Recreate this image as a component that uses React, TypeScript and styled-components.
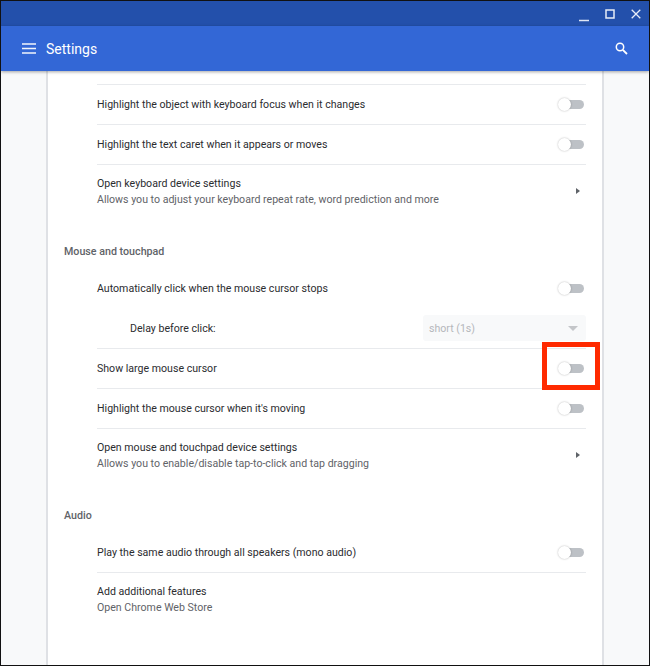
import React from "react";
import styled, { createGlobalStyle } from "styled-components";

const Global = createGlobalStyle`
  html, body { margin: 0; padding: 0; background: #000; }
  body { font-family: Roboto, "Noto Sans", sans-serif; -webkit-font-smoothing: antialiased; }
`;

const Frame = styled.div`
  position: relative;
  width: 650px;
  height: 666px;
  box-sizing: border-box;
  border: 1px solid #111;
  display: flex;
  flex-direction: column;
  overflow: hidden;
  background: #f8f9fa;
`;

const TitleBar = styled.div`
  height: 25px;
  flex: none;
  background: #2350ab;
  display: flex;
  align-items: center;
  justify-content: flex-end;
  padding-right: 8px;
  gap: 16px;
`;

const AppBar = styled.header`
  height: 45px;
  flex: none;
  background: #3367d6;
  box-shadow: 0 1px 3px rgba(0, 0, 0, 0.35);
  display: flex;
  align-items: center;
  padding: 0 21px 0 21px;
  color: #fff;
  position: relative;
  z-index: 2;
`;

const Title = styled.h1`
  margin: 0 0 0 10px;
  font-size: 14px;
  font-weight: 400;
  flex: 1;
`;

const Body = styled.main`
  flex: 1;
  display: flex;
  min-height: 0;
  padding-left: 45px;
`;

const Card = styled.section`
  width: 558px;
  box-sizing: border-box;
  background: #fff;
  border-left: 2px solid #dfe1e5;
  border-right: 2px solid #dfe1e5;
  padding: 13px 16px 0 16px;
`;

const Heading = styled.h2`
  margin: 0;
  height: 51px;
  box-sizing: border-box;
  padding-top: 27px;
  font-size: 10.7px;
  line-height: 16px;
  font-weight: 500;
  color: #5f6368;
`;

const List = styled.div`
  padding-left: 33px;
`;

const Row = styled.div<{ $tall?: boolean; $plain?: boolean; $indent?: boolean }>`
  box-sizing: border-box;
  height: ${(p) => (p.$tall ? "53px" : "40px")};
  display: flex;
  align-items: center;
  justify-content: space-between;
  border-top: ${(p) => (p.$plain ? "none" : "1px solid #e8eaed")};
  padding-left: ${(p) => (p.$indent ? "33px" : "0")};
  font-size: 10.6px;
  color: #2b2c2f;
`;

const Texts = styled.div`
  display: flex;
  flex-direction: column;
  padding-top: 1px;
  line-height: 16px;
`;

const Sub = styled.div`
  color: #5f6368;
`;

const Track = styled.div`
  position: relative;
  width: 22px;
  height: 9px;
  margin-right: 2px;
  border-radius: 5px;
  background: #bdc1c6;
`;

const Knob = styled.div`
  position: absolute;
  left: -4px;
  top: -2px;
  width: 13px;
  height: 13px;
  border-radius: 50%;
  background: #fff;
  box-shadow: 0 0 2px rgba(0, 0, 0, 0.3);
`;

const Select = styled.div`
  width: 163px;
  height: 26px;
  box-sizing: border-box;
  padding: 0 6px;
  border-radius: 3px;
  background: #f8f9fa;
  color: #b5b7ba;
  display: flex;
  align-items: center;
  justify-content: space-between;
`;

const Arrow = styled.div`
  width: 0;
  height: 0;
  margin-right: 2px;
  border-left: 5px solid transparent;
  border-right: 5px solid transparent;
  border-top: 5px solid #c4c6c9;
`;

const Chevron = styled.div`
  width: 0;
  height: 0;
  margin-right: 6px;
  border-top: 3.5px solid transparent;
  border-bottom: 3.5px solid transparent;
  border-left: 4px solid #5f6368;
`;

const Highlight = styled.div`
  position: absolute;
  left: 541px;
  top: 341px;
  width: 58px;
  height: 48px;
  box-sizing: border-box;
  border: 5px solid #ff2a00;
`;

const Toggle = () => (
  <Track>
    <Knob />
  </Track>
);

const App = () => (
  <>
    <Global />
    <Frame>
      <TitleBar>
        <svg width="10" height="14" viewBox="0 0 10 14" style={{ marginTop: 2 }}>
          <path d="M0 12.5h10" stroke="#dfe6f5" strokeWidth="1.5" />
        </svg>
        <svg width="10" height="10" viewBox="0 0 10 10">
          <path d="M1 1h8v8H1z" fill="none" stroke="#e6ecf8" strokeWidth="1.5" />
        </svg>
        <svg width="10" height="10" viewBox="0 0 10 10">
          <path d="M.7.7l8.6 8.6M9.3.7L.7 9.3" stroke="#e6ecf8" strokeWidth="1.3" />
        </svg>
      </TitleBar>
      <AppBar>
        <svg width="14" height="11" viewBox="0 0 14 11">
          <path d="M0 1h14M0 5.5h14M0 10h14" stroke="#f2f5fc" strokeWidth="1.5" />
        </svg>
        <Title>Settings</Title>
        <svg width="13" height="13" viewBox="0 0 13 13">
          <circle cx="5" cy="5" r="3.7" fill="none" stroke="#fff" strokeWidth="1.5" />
          <path d="M7.8 7.8l4.2 4.2" stroke="#fff" strokeWidth="1.8" />
        </svg>
      </AppBar>
      <Body>
        <Card>
          <List>
            <Row>
              Highlight the object with keyboard focus when it changes
              <Toggle />
            </Row>
            <Row>
              Highlight the text caret when it appears or moves
              <Toggle />
            </Row>
            <Row $tall>
              <Texts>
                Open keyboard device settings
                <Sub>Allows you to adjust your keyboard repeat rate, word prediction and more</Sub>
              </Texts>
              <Chevron />
            </Row>
          </List>
          <Heading>Mouse and touchpad</Heading>
          <List>
            <Row $plain>
              Automatically click when the mouse cursor stops
              <Toggle />
            </Row>
            <Row $plain $indent>
              Delay before click:
              <Select>
                short (1s)
                <Arrow />
              </Select>
            </Row>
            <Row>
              Show large mouse cursor
              <Toggle />
            </Row>
            <Row>
              Highlight the mouse cursor when it's moving
              <Toggle />
            </Row>
            <Row $tall>
              <Texts>
                Open mouse and touchpad device settings
                <Sub>Allows you to enable/disable tap-to-click and tap dragging</Sub>
              </Texts>
              <Chevron />
            </Row>
          </List>
          <Heading>Audio</Heading>
          <List>
            <Row $plain>
              Play the same audio through all speakers (mono audio)
              <Toggle />
            </Row>
            <Row $tall>
              <Texts>
                Add additional features
                <Sub>Open Chrome Web Store</Sub>
              </Texts>
            </Row>
          </List>
        </Card>
      </Body>
      <Highlight />
    </Frame>
  </>
);

export default App;
